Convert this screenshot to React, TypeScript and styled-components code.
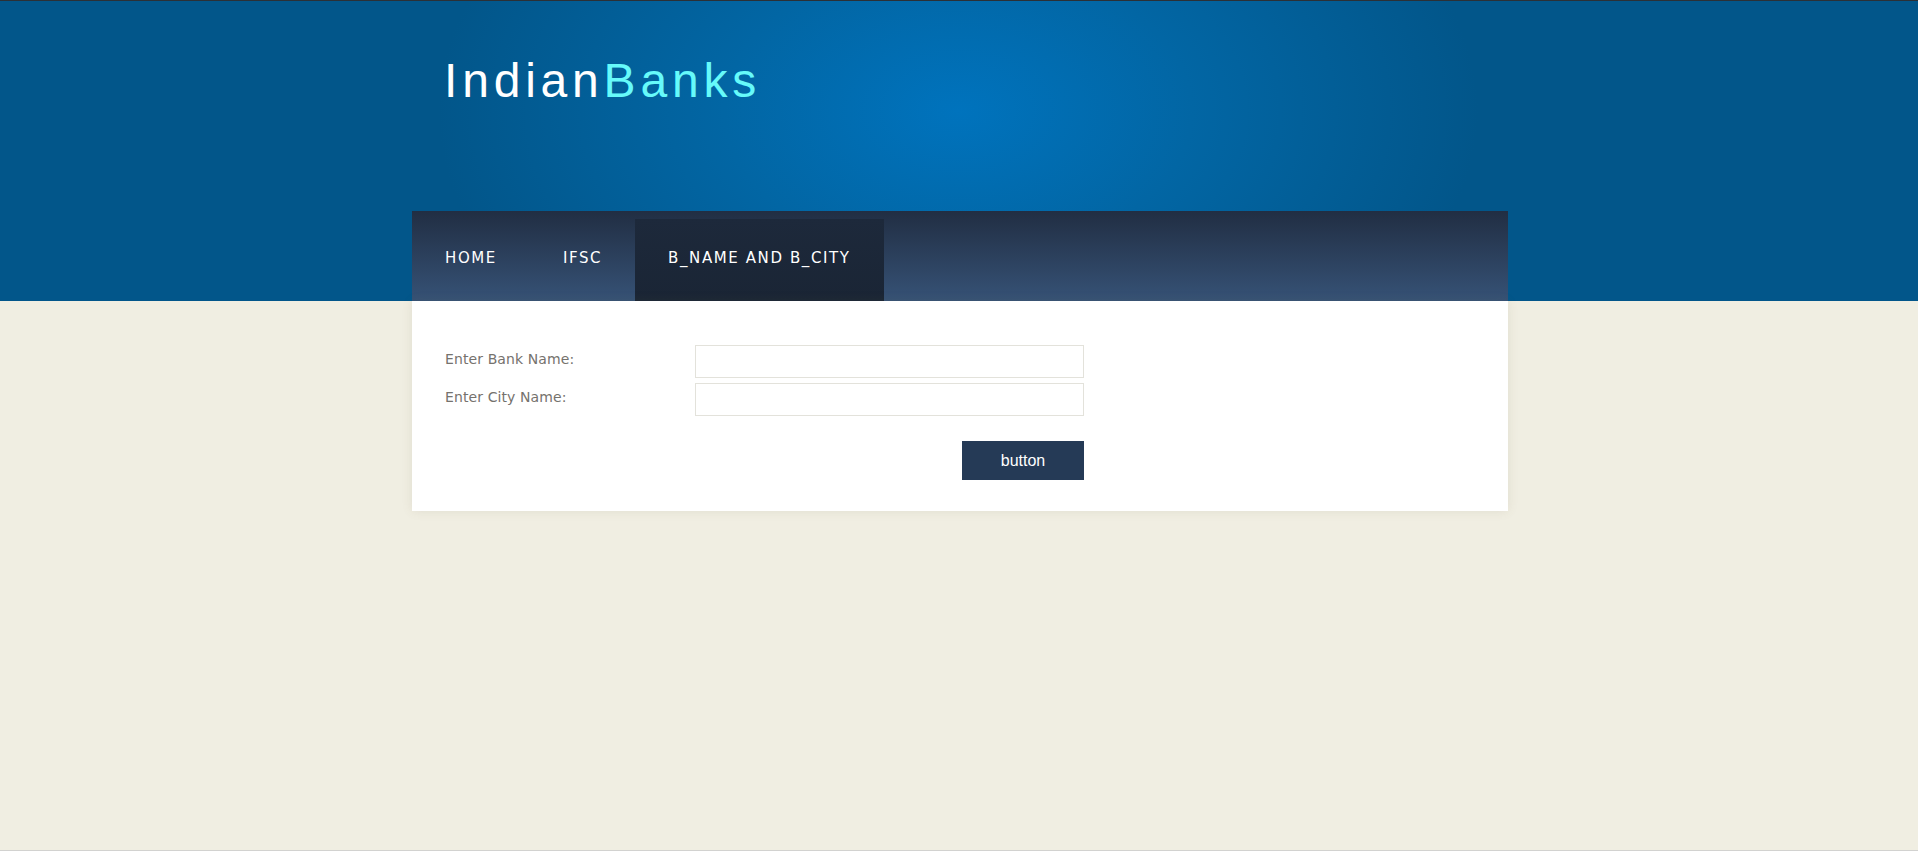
import React from "react";
import styled, { createGlobalStyle } from "styled-components";

const Global = createGlobalStyle`
  html, body { margin: 0; padding: 0; }
  body { background: #f0eee2; font-family: "DejaVu Sans", sans-serif; }
  * { box-sizing: border-box; }
`;

const Page = styled.div`
  min-height: 100vh;
  display: flex;
  flex-direction: column;
`;

const Header = styled.header`
  border-top: 1px solid #2b3036;
  background: radial-gradient(ellipse 520px 330px at 958px 110px, #0073bd 0%, #0266a4 45%, #02568a 100%);
`;

const Container = styled.div`
  width: 1096px;
  margin: 0 auto;
  position: relative;
  left: 1px;
`;

const Logo = styled.h1`
  margin: 0;
  padding: 52px 0 0 32px;
  height: 210px;
  font-family: "Liberation Sans", Arial, sans-serif;
  font-weight: normal;
  font-size: 48px;
  line-height: 56px;
  letter-spacing: 4.8px;
  color: #ffffff;
`;

const Accent = styled.span`
  color: #66fafa;
`;

const Nav = styled.nav`
  display: flex;
  align-items: flex-end;
  height: 90px;
  background: linear-gradient(to bottom, #212e43 0%, #365276 100%);
`;

const NavItem = styled.a<{ $active?: boolean }>`
  display: flex;
  align-items: center;
  height: 82px;
  padding: 0 33px;
  font-family: "DejaVu Sans", sans-serif;
  font-size: 15px;
  letter-spacing: 1.6px;
  color: #ffffff;
  text-decoration: none;
  background: ${(p) => (p.$active ? "linear-gradient(to bottom, #1d293b, #1a2535)" : "transparent")};
  line-height: 1;
  & > span { transform: translateY(-2px); }
`;

const Main = styled.main`
  background: #f0eee2;
`;

const Panel = styled.section`
  background: #ffffff;
  padding: 44px 33px 31px 33px;
  box-shadow: 0 0 10px rgba(120, 110, 70, 0.12);
`;

const Form = styled.form`
  width: 639px;
  display: flex;
  flex-direction: column;
  gap: 5px;
`;

const Row = styled.div`
  display: grid;
  grid-template-columns: 250px 389px;
  align-items: center;
`;

const Label = styled.label`
  font-family: "DejaVu Sans", sans-serif;
  font-size: 14px;
  letter-spacing: 0.1px;
  color: #75726d;
  transform: translateY(-3px);
`;

const Input = styled.input`
  height: 33px;
  width: 389px;
  border: 1px solid #e3e2db;
  background: #fff;
  outline: none;
  font-size: 14px;
`;

const Actions = styled.div`
  display: flex;
  justify-content: flex-end;
  margin-top: 20px;
`;

const Button = styled.button`
  width: 122px;
  height: 39px;
  border: none;
  background: #253a56;
  color: #ffffff;
  font-family: "Liberation Sans", Arial, sans-serif;
  font-size: 16px;
  cursor: pointer;
`;

const Footer = styled.div`
  margin-top: auto;
  height: 1px;
  background: #d2d2d0;
`;

export default function App() {
  return (
    <Page>
      <Global />
      <Header>
        <Container>
          <Logo>
            Indian<Accent>Banks</Accent>
          </Logo>
          <Nav>
            <NavItem href="#"><span>HOME</span></NavItem>
            <NavItem href="#"><span>IFSC</span></NavItem>
            <NavItem href="#" $active><span>B_NAME AND B_CITY</span></NavItem>
          </Nav>
        </Container>
      </Header>
      <Main>
        <Container>
          <Panel>
            <Form onSubmit={(e) => e.preventDefault()}>
              <Row>
                <Label htmlFor="bank">Enter Bank Name:</Label>
                <Input id="bank" type="text" />
              </Row>
              <Row>
                <Label htmlFor="city">Enter City Name:</Label>
                <Input id="city" type="text" />
              </Row>
              <Actions>
                <Button type="submit">button</Button>
              </Actions>
            </Form>
          </Panel>
        </Container>
      </Main>
      <Footer />
    </Page>
  );
}
